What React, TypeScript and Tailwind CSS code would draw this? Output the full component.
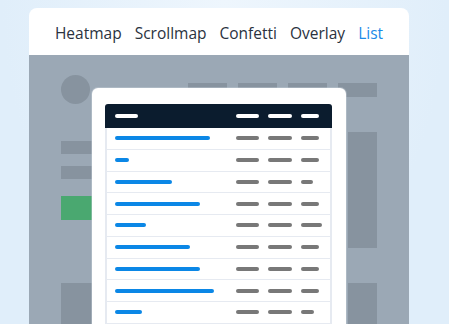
const tabs = ['Heatmap', 'Scrollmap', 'Confetti', 'Overlay', 'List']

const rows = [
  { name: 95, cols: [23, 24, 18] },
  { name: 14, cols: [23, 24, 18] },
  { name: 57, cols: [23, 24, 12] },
  { name: 85, cols: [23, 24, 18] },
  { name: 31, cols: [23, 24, 21] },
  { name: 75, cols: [23, 24, 18] },
  { name: 85, cols: [23, 24, 18] },
  { name: 99, cols: [23, 24, 18] },
  { name: 27, cols: [23, 24, 13] },
  { name: 60, cols: [23, 24, 18] },
]

function Bar({ w, className }: { w: number; className: string }) {
  return <div className={`h-[4px] rounded-full ${className}`} style={{ width: w }} />
}

export default function App() {
  return (
    <div className="w-[449px] h-[324px] overflow-hidden bg-[radial-gradient(ellipse_at_50%_0%,#eef6fd_0%,#e0eefa_70%)] pt-[8px] pl-[29px]">
      <div className="relative w-[380px] h-[340px] rounded-t-lg overflow-hidden bg-white">
        {/* tabs */}
        <div
          className="h-[47px] pt-[4px] flex items-center justify-center gap-[13px] text-[15.5px] text-[#2a323e]"
          style={{ fontFamily: '"Open Sans", "Noto Sans", sans-serif' }}
        >
          {tabs.map((t) => (
            <span key={t} className={t === 'List' ? 'text-[#1a8ae8]' : ''}>
              {t}
            </span>
          ))}
        </div>

        {/* wireframe page behind */}
        <div className="h-full bg-[#9ba8b5] px-[32px] pt-[20px]">
          <div className="flex justify-between items-start">
            <div className="w-[29px] h-[29px] rounded-full bg-[#87939f]" />
            <div className="flex gap-[11px] mt-[8px]">
              <div className="w-[39px] h-[14px] bg-[#87939f]" />
              <div className="w-[39px] h-[14px] bg-[#87939f]" />
              <div className="w-[39px] h-[14px] bg-[#87939f]" />
              <div className="w-[39px] h-[14px] bg-[#87939f]" />
            </div>
          </div>
          <div className="flex justify-between">
            <div className="flex flex-col pt-[37px]">
              <div className="w-[80px] h-[13px] bg-[#87939f]" />
              <div className="w-[80px] h-[13px] mt-[12px] bg-[#87939f]" />
              <div className="w-[80px] h-[24px] mt-[17px] bg-[#4aa870]" />
              <div className="w-[120px] h-[60px] mt-[63px] bg-[#87939f]" />
            </div>
            <div className="flex flex-col pt-[28px]">
              <div className="w-[29px] h-[116px] bg-[#87939f]" />
              <div className="w-[29px] h-[60px] mt-[35px] bg-[#87939f]" />
            </div>
          </div>
        </div>

        {/* list modal */}
        <div className="absolute left-[63px] top-[80px] w-[254px] h-[260px] rounded-md bg-white pt-[16px] pl-[13px] pr-[14px] shadow-[0_0_0_1px_rgba(200,210,220,0.4)]">
          <div className="flex items-center h-[24px] rounded-t-[3px] bg-[#0b1c2e] pl-[10px]">
            <Bar w={23} className="bg-white" />
            <div className="ml-auto flex">
              <div className="w-[32px]"><Bar w={23} className="bg-white" /></div>
              <div className="w-[33px]"><Bar w={24} className="bg-white" /></div>
              <div className="w-[31px]"><Bar w={18} className="bg-white" /></div>
            </div>
          </div>
          <div className="border-x-2 border-[#e6eaf1]">
            {rows.map((r, i) => (
              <div key={i} className="flex items-center h-[21.75px] border-b border-[#e6eaf1] pl-[8px]">
                <Bar w={r.name} className="bg-[#0b87e6]" />
                <div className="ml-auto flex">
                  <div className="w-[32px]"><Bar w={r.cols[0]} className="bg-[#787878]" /></div>
                  <div className="w-[33px]"><Bar w={r.cols[1]} className="bg-[#787878]" /></div>
                  <div className="w-[29px]"><Bar w={r.cols[2]} className="bg-[#787878]" /></div>
                </div>
              </div>
            ))}
          </div>
        </div>
      </div>
    </div>
  )
}
